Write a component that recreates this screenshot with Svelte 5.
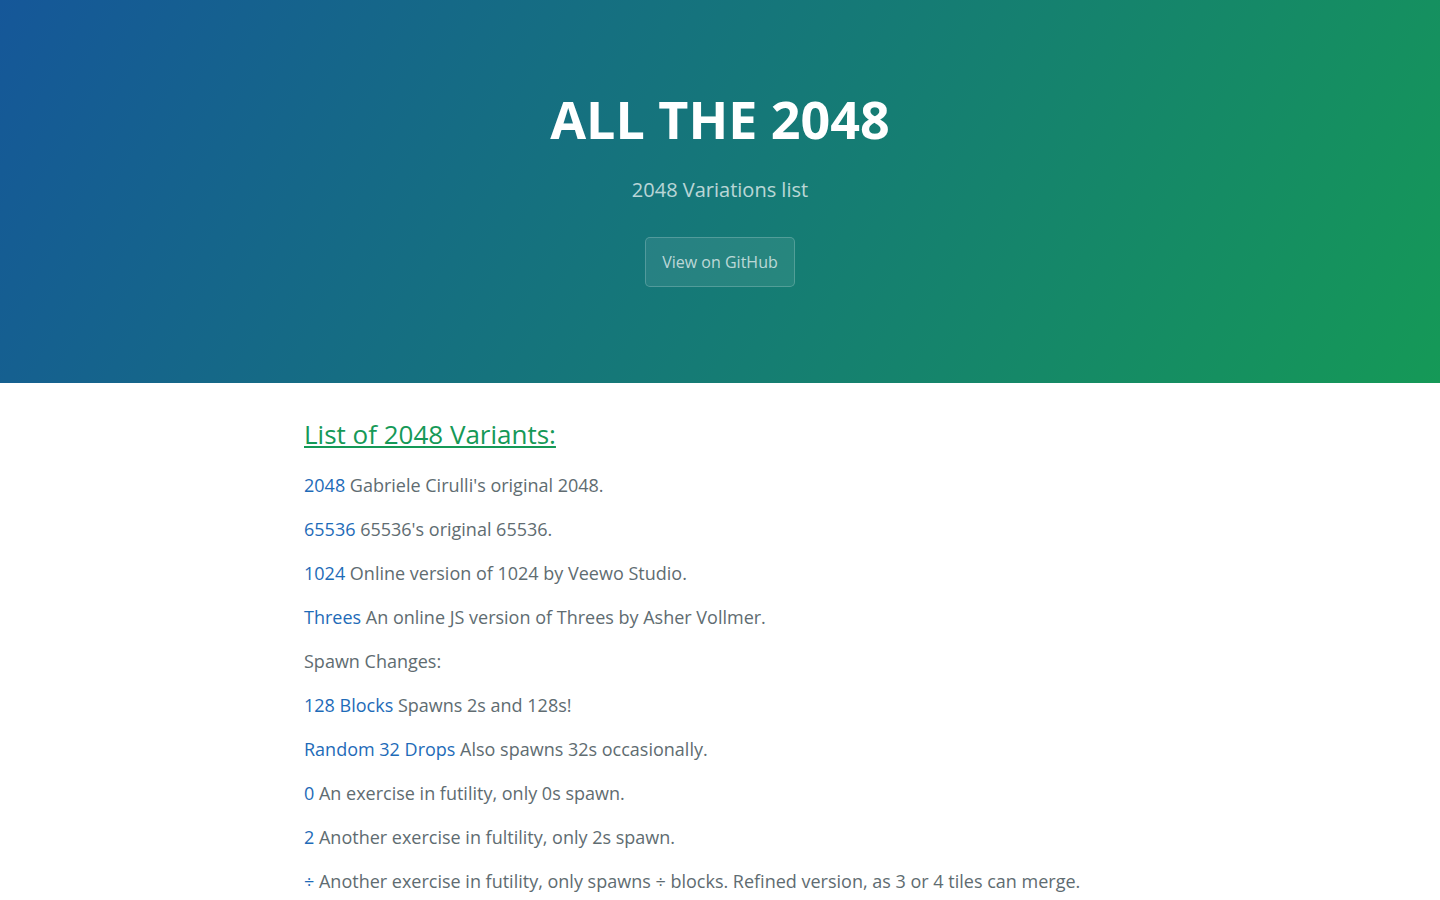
<script>
  const originals = [
    { name: '2048', text: "Gabriele Cirulli's original 2048." },
    { name: '65536', text: "65536's original 65536." },
    { name: '1024', text: 'Online version of 1024 by Veewo Studio.' },
    { name: 'Threes', text: 'An online JS version of Threes by Asher Vollmer.' }
  ];
  const spawnChanges = [
    { name: '128 Blocks', text: 'Spawns 2s and 128s!' },
    { name: 'Random 32 Drops', text: 'Also spawns 32s occasionally.' },
    { name: '0', text: 'An exercise in futility, only 0s spawn.' },
    { name: '2', text: 'Another exercise in fultility, only 2s spawn.' },
    { name: '÷', text: 'Another exercise in futility, only spawns ÷ blocks. Refined version, as 3 or 4 tiles can merge.' }
  ];
</script>

<header class="page-header">
  <h1>ALL THE 2048</h1>
  <p class="tagline">2048 Variations list</p>
  <a class="btn" href="#github">View on GitHub</a>
</header>

<main class="content">
  <h2>List of 2048 Variants:</h2>
  {#each originals as item}
    <p><a href="#variant">{item.name}</a> {item.text}</p>
  {/each}
  <p>Spawn Changes:</p>
  {#each spawnChanges as item}
    <p><a href="#variant">{item.name}</a> {item.text}</p>
  {/each}
</main>

<style>
  :global(body) {
    margin: 0;
    font-family: "Open Sans", "Helvetica Neue", Helvetica, Arial, sans-serif;
    font-size: 16px;
    line-height: 1.5;
    color: #606c71;
    background: #fff;
  }

  .page-header {
    padding: 80px 96px;
    color: #fff;
    text-align: center;
    background-color: #159957;
    background-image: linear-gradient(120deg, #155799, #159957);
  }

  h1 {
    margin: 0 0 17px;
    font-size: 52px;
    font-weight: 700;
    line-height: 78px;
  }

  .tagline {
    margin: 0 0 32px;
    font-size: 20px;
    line-height: 30px;
    opacity: 0.7;
  }

  .btn {
    display: inline-block;
    margin-bottom: 16px;
    padding: 12px 16px;
    color: rgba(255, 255, 255, 0.7);
    text-decoration: none;
    background-color: rgba(255, 255, 255, 0.08);
    border: 1px solid rgba(255, 255, 255, 0.2);
    border-radius: 5px;
  }

  .content {
    box-sizing: border-box;
    max-width: 1024px;
    margin: 0 auto;
    padding: 32px 96px;
    font-size: 18px;
    line-height: 26px;
    overflow-wrap: break-word;
  }

  h2 {
    margin: 0 0 18px;
    font-size: 26px;
    font-weight: 400;
    line-height: 39px;
    color: #159957;
    text-decoration: underline;
  }

  .content p {
    margin: 0 0 18px;
  }

  .content a {
    color: #1e6bb8;
    text-decoration: none;
  }

  .content a:hover {
    text-decoration: underline;
  }
</style>
